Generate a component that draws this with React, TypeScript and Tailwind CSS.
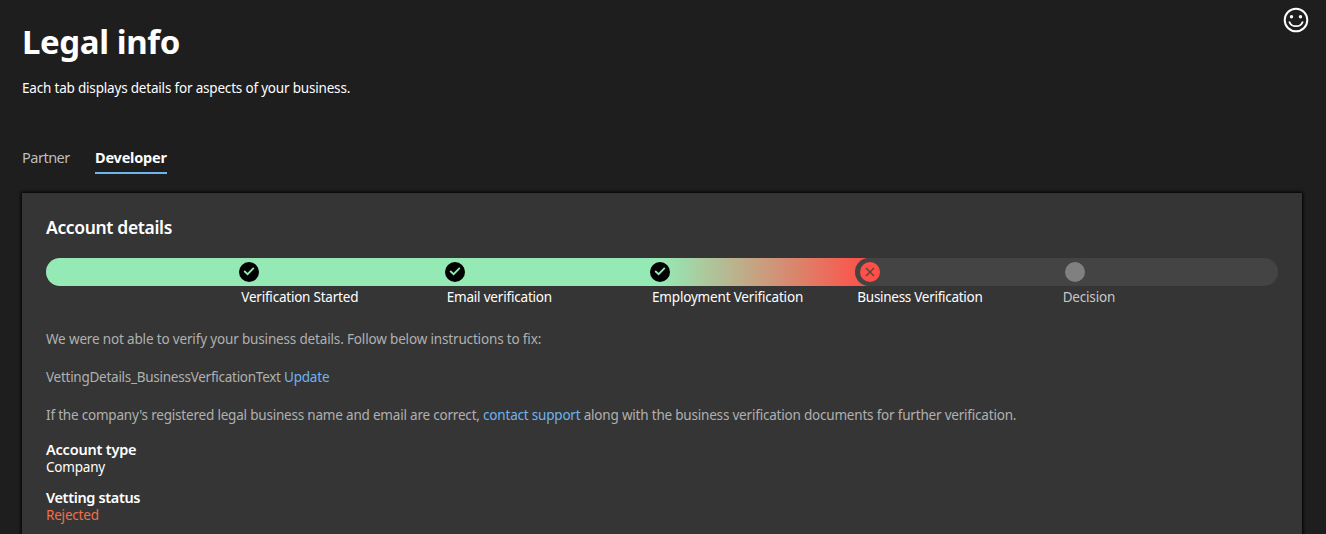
import React from "react";

type StepState = "done" | "failed" | "pending";

interface Step {
  label: string;
  state: StepState;
  tracking: string;
  marker: string;
}

const steps: Step[] = [
  { label: "Verification Started", state: "done", tracking: "tracking-[-0.22px]", marker: "-right-[7.7px]" },
  { label: "Email verification", state: "done", tracking: "tracking-[-0.19px]", marker: "-right-[8.4px]" },
  { label: "Employment Verification", state: "done", tracking: "tracking-[-0.18px]", marker: "-right-[8px]" },
  { label: "Business Verification", state: "failed", tracking: "tracking-[-0.28px]", marker: "-right-[16px]" },
  { label: "Decision", state: "pending", tracking: "tracking-[-0.18px]", marker: "-right-[12.5px]" },
];

const fills: Record<StepState, string> = {
  done: "bg-[#95e9b4]",
  failed: "bg-linear-to-r/srgb from-[#95e9b4] to-[#ff4f47]",
  pending: "bg-[#444444]",
};

function StepMarker({ state, marker }: { state: StepState; marker: string }) {
  if (state === "done") {
    return (
      <span className={`absolute top-1 z-10 flex size-5 items-center justify-center rounded-full bg-black ${marker}`}>
        <svg viewBox="0 0 12 12" className="mb-0.5 size-3" fill="none" stroke="#95e9b4" strokeWidth="1.8">
          <path d="M1.2 6 4.6 9.2 10.8 2.8" />
        </svg>
      </span>
    );
  }
  if (state === "failed") {
    return (
      <span className={`absolute top-0 z-10 flex size-7 items-center justify-center rounded-full bg-[#444444] pl-px ${marker}`}>
        <span className="flex size-5 items-center justify-center rounded-full bg-[#ff4f47]">
          <svg viewBox="0 0 10 10" className="size-2.5" fill="none" stroke="#444444" strokeWidth="1.2">
            <path d="M1 1 9 9M9 1 1 9" />
          </svg>
        </span>
      </span>
    );
  }
  return <span className={`absolute top-1 z-10 size-5 rounded-full bg-[#808080] ${marker}`} />;
}

function Progress() {
  return (
    <div>
      <div className="grid h-7 grid-cols-6 overflow-hidden rounded-full bg-[#444444]">
        {steps.map((s) => (
          <div key={s.label} className={`relative ${fills[s.state]}`}>
            <StepMarker state={s.state} marker={s.marker} />
          </div>
        ))}
      </div>
      <div className="grid grid-cols-6 pt-0.5 leading-[19px]">
        {steps.map((s, i) => (
          <span
            key={s.label}
            className={`-ml-2.5 whitespace-nowrap ${s.tracking} ${i === 0 ? "col-start-2" : ""} ${
              s.state === "pending" ? "text-[#c8c8c8]" : "text-white"
            }`}
          >
            {s.label}
          </span>
        ))}
      </div>
    </div>
  );
}

export default function App() {
  return (
    <div className="h-[534px] overflow-hidden bg-[#1e1e1e] pr-6 pl-[22px] font-['Noto_Sans','Open_Sans',sans-serif] text-[13.5px] text-white">
      <header className="flex h-[130px] justify-between">
        <div className="pt-[18px]">
          <h1 className="text-[33px] leading-[48px] font-bold tracking-[-0.4px]">Legal info</h1>
          <p className="pt-[12px] leading-5 tracking-[-0.19px]">
            <span>Each tab displays details for aspects of your business.</span>
          </p>
        </div>
        <button className="-mr-[7px] h-10 w-[26px]" aria-label="Feedback">
          <svg viewBox="0 0 26 26" className="size-[26px]" fill="none" stroke="white" strokeWidth="2">
            <circle cx="13" cy="13" r="11.3" />
            <path d="M6.2 14.4C8.2 20.8 17.8 20.8 19.8 14.4" strokeWidth="1.8" />
            <circle cx="8.5" cy="9.8" r="1.7" fill="white" stroke="none" />
            <circle cx="17.5" cy="9.8" r="1.7" fill="white" stroke="none" />
          </svg>
        </button>
      </header>

      <nav className="flex h-[63px] gap-[25px] pt-4 text-[14.5px]">
        <span className="h-7 w-12 leading-[23px] tracking-[-0.5px] text-[#bdbdbd]">Partner</span>
        <span className="h-7 w-[72px] border-b-2 border-[#6cb4ee] leading-[23px] font-bold tracking-[-0.2px]">
          Developer
        </span>
      </nav>

      <main className="h-[360px] bg-[#353535] px-6 pt-[22px] shadow-[0_0_3px_1px_#000]">
        <h2 className="pb-[19px] text-[17.5px] leading-6 font-semibold tracking-[-0.35px]">
          <span>Account details</span>
        </h2>
        <Progress />
        <div className="space-y-[18px] pt-[22px] leading-5 text-[#b0b0b0]">
          <p className="tracking-[-0.16px]">
            <span>We were not able to verify your business details. Follow below instructions to fix:</span>
          </p>
          <p className="tracking-[-0.26px]">
            VettingDetails_BusinessVerficationText <a className="tracking-[-0.2px] text-[#6cb4ee]">Update</a>
          </p>
          <p className="tracking-[-0.2px]">
            If the company's registered legal business name and email are correct,{" "}
            <a className="text-[#6cb4ee]">contact support</a> along with the business verification documents for
            further verification.
          </p>
        </div>
        <dl className="pt-[15px] leading-[18px]">
          <dt className="pt-px text-[14.5px] leading-[17px] font-semibold tracking-[-0.2px]">Account type</dt>
          <dd className="tracking-[-0.2px]">Company</dd>
          <dt className="pt-[13px] text-[14.5px] leading-[17px] font-semibold tracking-[-0.36px]">Vetting status</dt>
          <dd className="tracking-[-0.2px] text-[#f1704b]">Rejected</dd>
        </dl>
      </main>
    </div>
  );
}
